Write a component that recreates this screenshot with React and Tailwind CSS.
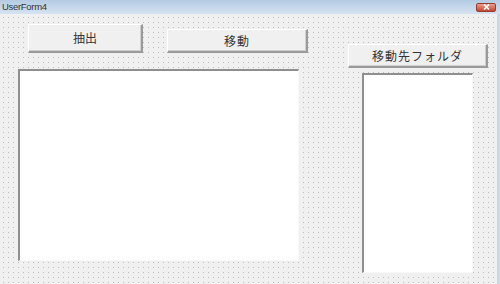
// VBA UserForm designer view: two buttons, a list box and a folder picker
const raised =
  'bg-[#f0f0f0] border-t border-l border-t-white border-l-white border-b-2 border-r-2 border-b-[#9a9a9a] border-r-[#9a9a9a] shadow-[inset_-1px_-1px_0_#d0d0d0] flex items-center justify-center text-[12px] text-[#333] font-["Noto_Sans_CJK_JP","Noto_Sans_CJK_SC",sans-serif]';

const sunken =
  'bg-white border-t-2 border-l-2 border-t-[#8f8f8f] border-l-[#8f8f8f] border-b border-r border-b-[#f8f8f8] border-r-[#f8f8f8]';

function CloseButton() {
  return (
    <div className="w-[20px] h-[9px] rounded-[2px] border border-[#9c3b2c] bg-[linear-gradient(#e9a08f,#c8432c)] flex items-center justify-center">
      <svg width="7" height="6" viewBox="0 0 7 6">
        <path d="M1 0.5 L6 5.5 M6 0.5 L1 5.5" stroke="white" strokeWidth="1.6" />
      </svg>
    </div>
  );
}

export default function App() {
  return (
    <div className="w-[500px] h-[284px] flex flex-col overflow-hidden bg-[#f0f0f0] font-['Liberation_Sans',sans-serif]">
      {/* title bar */}
      <div className="h-[14px] flex items-center justify-between pl-[2px] pr-[4px] bg-[linear-gradient(#b4cbe4,#d6e3f1)]">
        <span className="text-[9.5px] leading-none text-[#333] tracking-[-0.3px]">UserForm4</span>
        <CloseButton />
      </div>

      {/* design surface */}
      <div className="flex-1 flex border-r-[3px] border-r-[#c9d9ea] bg-[#f0f0f0] bg-[radial-gradient(#bdbdbd_0.75px,transparent_0.9px)] bg-[size:5px_5px] bg-[position:1px_1px]">
        <div className="pl-[18px] pt-[10px] flex flex-col">
          <div className="pl-[10px] flex items-start gap-[24px]">
            <div className={`${raised} w-[115px] h-[29px]`}>抽出</div>
            <div className={`${raised} w-[141px] h-[24px] mt-[5px] tracking-[1px]`}>移動</div>
          </div>
          <div className={`${sunken} w-[281px] h-[192px] mt-[16px]`} />
        </div>

        <div className="ml-[40px] pt-[30px] flex flex-col">
          <div className={`${raised} w-[140px] h-[24px] tracking-[1px]`}>移動先フォルダ</div>
          <div className={`${sunken} w-[111px] h-[200px] mt-[5px] ml-[14px]`} />
        </div>
      </div>
    </div>
  );
}
